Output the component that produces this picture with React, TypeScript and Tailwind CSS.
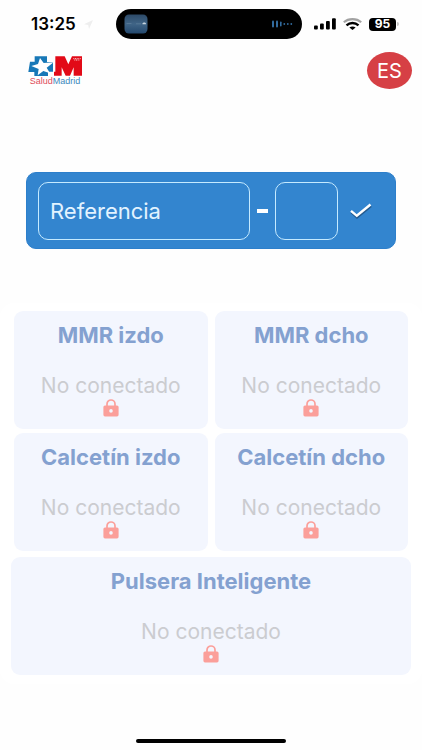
import {useState} from 'react';

const LockIcon = ()=>{
    return (
        <svg className="w-4 h-[18px] shrink-0" viewBox="0 0 16 18" fill="none" aria-hidden="true">
            <path d="M4 7V5a4 4 0 0 1 8 0v2" stroke="#fb9f9a" strokeWidth="1.7" />
            <path fillRule="evenodd" fill="#fb9f9a" d="M2 6.4h12a1.6 1.6 0 0 1 1.6 1.6v7.8a1.6 1.6 0 0 1-1.6 1.6H2a1.6 1.6 0 0 1-1.6-1.6V8A1.6 1.6 0 0 1 2 6.4ZM8 10.1a1.8 1.8 0 1 0 0 3.6 1.8 1.8 0 0 0 0-3.6Z" />
        </svg>
    )
}

const DeviceCard = ({title}: {title: string})=>{
    return (
        <section className="flex flex-col items-center h-[118px] pt-3 rounded-[9px] bg-[#f3f6fe]">
            <h2 className="text-[22px] leading-6 font-bold text-[#84a1d0]">{title}</h2>
            <p className="mt-[26px] text-[21px] leading-[26px] text-[#cbccd0]">No conectado</p>
            <LockIcon />
        </section>
    )
}

const StatusBar = ()=>{
    return (
        <div className="flex items-center pt-[9px] text-black">
            <div className="flex flex-1 items-center gap-2 pl-[31px]">
                <span className="text-[17px] leading-5 font-semibold">13:25</span>
                <svg className="w-[9px] h-[9px]" viewBox="0 0 9 9" fill="#eeeeee" aria-hidden="true">
                    <path d="M9 0 5 9 4.2 5 0 4.2Z" />
                </svg>
            </div>
            <div className="flex items-center justify-between w-[186px] h-[30px] pl-2 pr-[9px] rounded-full bg-black">
                <svg className="w-6 h-5" viewBox="0 0 24 20" aria-hidden="true">
                    <defs>
                        <linearGradient id="thumb" x1="0" y1="0" x2="0" y2="1">
                            <stop offset="0" stopColor="#2d4a68" />
                            <stop offset="0.5" stopColor="#406587" />
                            <stop offset="1" stopColor="#24486d" />
                        </linearGradient>
                    </defs>
                    <rect x="0.5" y="0.5" width="23" height="19" rx="4.5" fill="url(#thumb)" />
                    <path d="M2.5 9.5h5M12 9.8h5" stroke="#6784a0" strokeWidth="0.6" />
                    <path d="M18.5 10.3v-1l1.2-.8h1.2l1 .8v1Z" fill="#c8d5df" />
                </svg>
                <svg className="w-[21px] h-2" viewBox="0 0 21 8" fill="#326b9d" aria-hidden="true">
                    <rect x="0" y="0.5" width="2" height="7" rx="1" />
                    <rect x="4" y="0.5" width="2" height="7" rx="1" />
                    <rect x="8" y="1.5" width="1.6" height="5" rx="0.8" />
                    <circle cx="12.3" cy="4" r="0.9" />
                    <circle cx="15.8" cy="4" r="0.9" />
                    <circle cx="19.3" cy="4" r="0.9" />
                </svg>
            </div>
            <div className="flex items-center w-[120px] pl-3">
                <svg className="w-[22px] h-3" viewBox="0 0 22 12" aria-hidden="true">
                    <rect x="0" y="7.5" width="3.8" height="4" rx="1" />
                    <rect x="6" y="5.5" width="3.8" height="6" rx="1" />
                    <rect x="12" y="3" width="3.8" height="8.5" rx="1" />
                    <rect x="18" y="0.3" width="3.8" height="11.2" rx="1" />
                </svg>
                <svg className="w-[19px] h-3 ml-[7px]" viewBox="0 0 19 12" fill="none" strokeWidth="2.1" aria-hidden="true">
                    <path d="M.8 4.3C5.5.1 13.5.1 18.2 4.3" stroke="#a2a2a2" />
                    <path d="M3.5 7.3c3.4-3 8.6-3 12 0" stroke="#000000" strokeWidth="2.4" />
                    <path d="M6.4 9.5c1.7-1.500 4.500-1.500 6.200 0L9.500 12Z" fill="#000000" />
                </svg>
                <div className="flex items-center justify-center w-[27px] h-[13px] ml-[7px] rounded-[4px] bg-black text-white text-xs leading-3 font-bold">95</div>
                <div className="w-[2px] h-1 ml-px rounded-r-full bg-[#c4c4c4]"></div>
            </div>
        </div>
    )
}

const Logo = ()=>{
    return (
        <div className="flex flex-col items-center w-[54px] mt-1">
            <svg className="w-[54px] h-5" viewBox="0 0 162 60" aria-hidden="true">
                <path fill="#1878b7" d="M20 1h37v17h18v29H60v13H19V48H1l5-31h14Z" />
                <path fill="#ffffff" d="m36 6 11 15 30-2-21 16 10 17-20-7-17 13 3-19-22-9 20-6Z" />
                <path fill="#e20a17" d="M82 1h28l11 24 11-24h30v58h-25V34l-11 25h-13L101 34v25H78V47h4Z" />
                <path stroke="#ffffff" strokeWidth="2.5" strokeDasharray="3 2" d="M136 8h22M139 12h16" />
            </svg>
            <p className="font-['Liberation_Sans',sans-serif] text-[9px] leading-[10px] whitespace-nowrap text-[#3c89bd]"><span className="text-[#df4c59]">Salud</span>Madrid</p>
        </div>
    )
}

const App = ()=>{
    const [reference, setReference] = useState("")
    const [digit, setDigit] = useState("")

    const formSubmit = (e:any)=>{
        e.preventDefault();
    }

    return (
        <div className="flex flex-col min-h-screen bg-[#fefefe] font-[Inter,sans-serif]">
            <StatusBar />
            <header className="flex items-start justify-between pt-[13px] pl-7 pr-[10px]">
                <Logo />
                <button type="button" className="w-[45px] h-[37px] rounded-[50%] bg-[#d64045] text-white text-xl leading-5 cursor-pointer">ES</button>
            </header>

            <main>
                <form className="flex items-center h-[77px] mt-[83px] mx-[26px] px-[11px] rounded-[10px] bg-[#3385cf] border border-[#2d7fcb]" onSubmit={formSubmit}>
                    <input type="text" aria-label="Referencia" placeholder="Referencia"
                    className="flex-1 min-w-0 h-[58px] px-[11px] border border-[#c5eaff] rounded-[10px] bg-transparent text-[22px] text-white placeholder:text-[#e2f3ff] outline-none"
                    value={reference}
                    onChange={(e)=>setReference(e.target.value)} />
                    <span className="w-[11px] h-1 mx-[7px] bg-white" aria-hidden="true"></span>
                    <input type="text" aria-label="Dígito de control"
                    className="w-[63px] h-[58px] px-[11px] border border-[#c5eaff] rounded-[10px] bg-transparent text-[22px] text-white outline-none"
                    value={digit}
                    onChange={(e)=>setDigit(e.target.value)} />
                    <button type="submit" aria-label="Confirmar" className="mx-3 cursor-pointer">
                        <svg className="w-[22px] h-4" viewBox="0 0 22 16" fill="none">
                            <path d="m1.5 9.3 5.5 5L21 3" stroke="#245b8f" strokeWidth="2.5" />
                            <path d="m1 7.8 5.8 5L20.5 1.5" stroke="#ffffff" strokeWidth="2.4" />
                        </svg>
                    </button>
                </form>

                <div className="mt-[54px] pt-2 pb-[9px] px-[11px] rounded-[14px] bg-white">
                    <div className="grid grid-cols-2 gap-x-[7px] gap-y-1 px-[3px]">
                        <DeviceCard title="MMR izdo" />
                        <DeviceCard title="MMR dcho" />
                        <DeviceCard title="Calcetín izdo" />
                        <DeviceCard title="Calcetín dcho" />
                    </div>
                    <div className="mt-[6px]">
                        <DeviceCard title="Pulsera Inteligente" />
                    </div>
                </div>
            </main>

            <div className="w-[150px] h-1 mt-auto mb-[7px] mx-auto rounded-full bg-black"></div>
        </div>
    )
}

export default App;
